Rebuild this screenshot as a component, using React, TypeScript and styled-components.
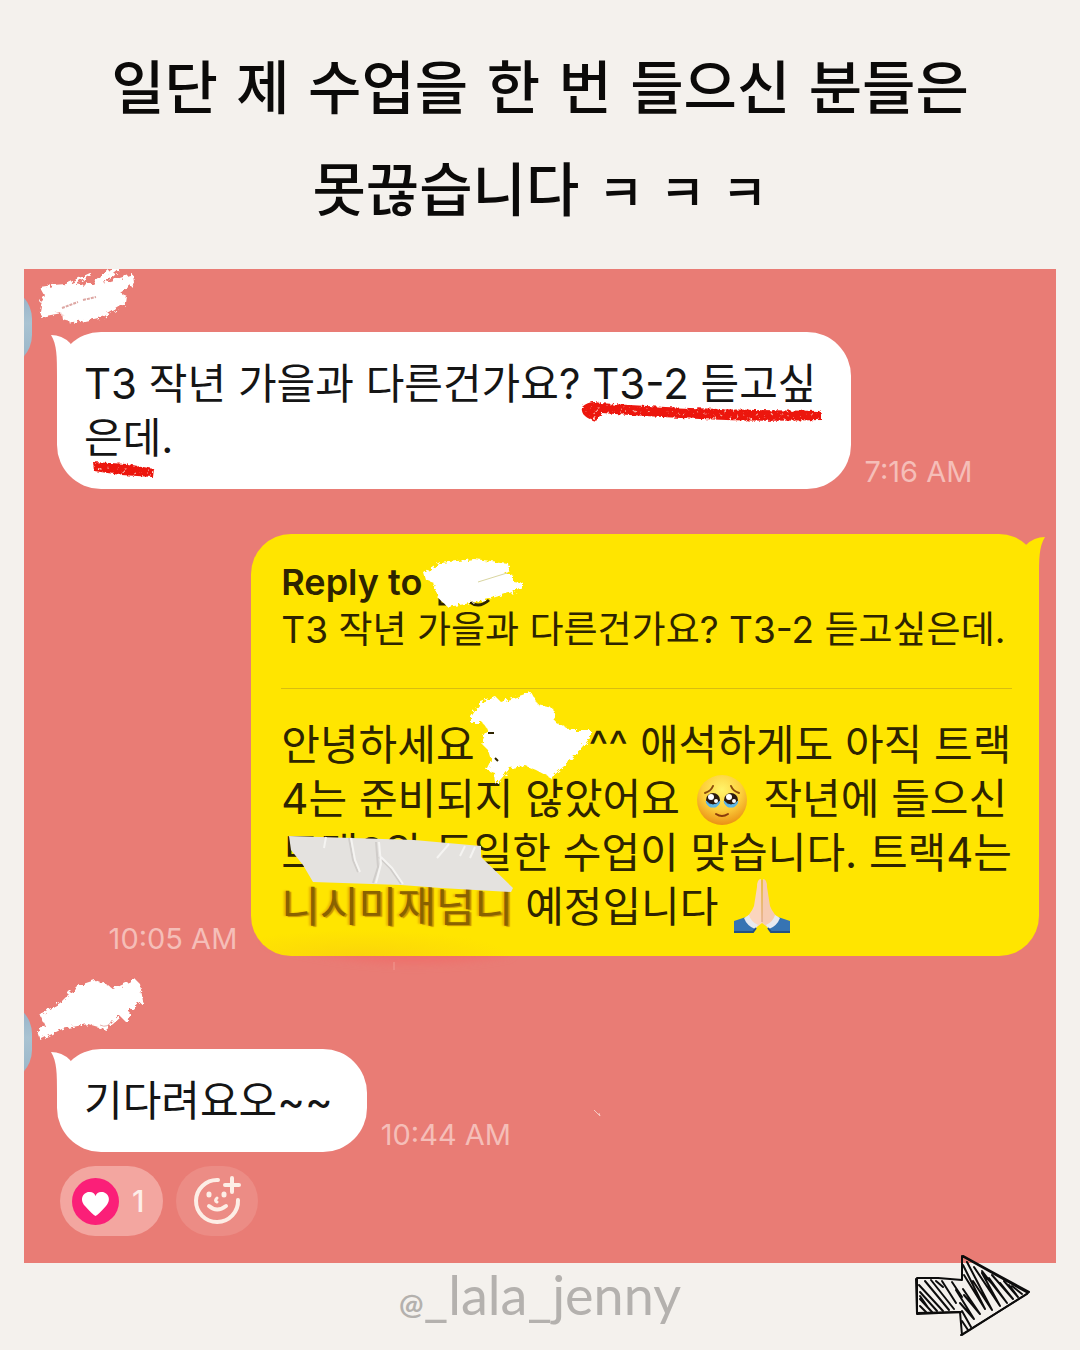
import React from "react";
import styled, { createGlobalStyle } from "styled-components";

const GlobalStyle = createGlobalStyle`
  * { box-sizing: border-box; }
  body {
    margin: 0;
    background: #f4f1ed;
    font-family: Inter, "Noto Sans CJK KR", sans-serif;
  }
`;

const Page = styled.main`
  min-height: 100vh;
  padding: 38px 24px 0;
  background: #f4f1ed;
`;

const Title = styled.h1`
  margin: 0 0 24px;
  color: #0b0a09;
  font-family: "DejaVu Sans", "Noto Sans CJK KR", sans-serif;
  font-size: 58px;
  font-weight: 500;
  line-height: 102px;
  text-align: center;
`;

const TitleLine = styled.span`
  display: block;
`;

const Giggle = styled.span`
  font-size: 50px;
`;

const Chat = styled.section`
  position: relative;
  display: flex;
  flex-direction: column;
  padding-bottom: 27px;
  overflow: hidden;
  background: #e97c75;
`;

const Sender = styled.div<{ $tall?: boolean }>`
  position: relative;
  height: ${(p) => (p.$tall ? 72 : 63)}px;
  margin-top: ${(p) => (p.$tall ? 21 : 0)}px;
  padding-left: 12px;
`;

const Avatar = styled.span<{ $top: number }>`
  position: absolute;
  top: ${(p) => p.$top}px;
  left: -72px;
  width: 80px;
  height: 80px;
  border-radius: 32px;
  background: linear-gradient(#93aec5, #a9c3d2 45%, #96b3c6);
`;

const Row = styled.div<{ $mine?: boolean }>`
  position: relative;
  display: flex;
  flex-direction: ${(p) => (p.$mine ? "row-reverse" : "row")};
  align-items: flex-end;
  gap: 14px;
  padding: ${(p) => (p.$mine ? "0 17px 0 0" : "0 0 0 33px")};
  margin-top: ${(p) => (p.$mine ? 45 : 0)}px;
`;

const Bubble = styled.div<{ $mine?: boolean }>`
  position: relative;
  padding: ${(p) => (p.$mine ? "24px 27px 22px 30px" : "25px 34px 24px 27px")};
  border-radius: ${(p) => (p.$mine ? 40 : 44)}px;
  background: ${(p) =>
    p.$mine
      ? "radial-gradient(150px 26px at 110px 100%, #fbd50a, transparent) #ffe500"
      : "#ffffff"};
  color: ${(p) => (p.$mine ? "#2e2400" : "#151515")};
`;

const Tail = styled.svg<{ $mine?: boolean }>`
  position: absolute;
  top: 0;
  ${(p) => (p.$mine ? "right: -7px; transform: scaleX(-1);" : "left: -7px;")}
`;

const Text = styled.p`
  margin: 0;
  font-size: 42px;
  font-weight: 400;
  line-height: 54px;
  white-space: nowrap;
`;

const Line = styled.span`
  display: block;
`;

const Marked = styled.span`
  position: relative;
`;

const Marker = styled.svg`
  position: absolute;
  left: -12px;
  top: 42px;
`;

const Stamp = styled.time`
  color: #f5beb8;
  font-size: 29px;
  line-height: 34px;
  white-space: nowrap;
`;

const Quote = styled.blockquote`
  margin: 0 0 29px;
  padding-bottom: 34px;
  border-bottom: 1px solid #d9bd10;
`;

const QuoteHead = styled.strong`
  display: block;
  font-size: 36px;
  font-weight: 600;
  line-height: 48px;
`;

const QuoteText = styled.p`
  margin: 0;
  font-size: 37px;
  font-weight: 400;
  line-height: 48px;
  white-space: nowrap;
`;

const Hidden = styled.span<{ $width: number }>`
  position: relative;
  display: inline-block;
  width: ${(p) => p.$width}px;
  height: 1px;
`;

const Cover = styled.svg<{ $left: number; $top: number }>`
  position: absolute;
  z-index: 1;
  left: ${(p) => p.$left}px;
  top: ${(p) => p.$top}px;
  overflow: visible;
`;

const Smudged = styled.span`
  margin: 0 12px 0 0;
  color: #8a6200;
  text-shadow: 2px 1px 1px #c48f00, -2px 0 2px #e8b800;
`;

const Smear = styled.svg`
  position: absolute;
  left: 226px;
  bottom: -22px;
`;

const Emoji = styled.svg`
  margin: -8px 4px;
  vertical-align: -4px;
`;

const Fleck = styled.svg`
  align-self: flex-start;
  margin: 60px 0 0 68px;
`;

const Reactions = styled.div`
  display: flex;
  gap: 13px;
  padding: 14px 36px 0;
`;

const Reaction = styled.button<{ $count?: boolean }>`
  display: flex;
  align-items: center;
  justify-content: ${(p) => (p.$count ? "flex-start" : "center")};
  gap: 13px;
  width: ${(p) => (p.$count ? 103 : 82)}px;
  height: 70px;
  padding: 0 12px;
  border: 0;
  border-radius: 35px;
  background: ${(p) => (p.$count ? "#f3a6a0" : "#ec8c85")};
  color: #fdeee9;
  font-family: Inter, sans-serif;
  font-size: 30px;
  font-weight: 500;
`;

const Footer = styled.footer`
  position: relative;
  display: flex;
  justify-content: center;
`;

const Handle = styled.a`
  color: #b4b1ae;
  font-family: Lato, sans-serif;
  font-size: 54px;
  line-height: 64px;
  text-decoration: none;
`;

const At = styled.span`
  font-size: 29px;
  font-weight: 700;
`;

const NextArrow = styled.svg`
  position: absolute;
  top: -12px;
  right: 24px;
`;

const BubbleTail = ({ mine }: { mine?: boolean }) => (
  <Tail $mine={mine} width="34" height="46" viewBox="-7 0 34 46" aria-hidden="true">
    <path d="M-6 3Q5 3 13 11L26 30L0 45C0 24 0 13-6 3Z" fill={mine ? "#ffe500" : "#fff"} />
  </Tail>
);

const Filters = () => (
  <svg width="0" height="0" style={{ position: "absolute" }} aria-hidden="true">
    <filter id="rough" x="-10%" y="-20%" width="120%" height="140%">
      <feTurbulence type="fractalNoise" baseFrequency="0.22" numOctaves="3" seed="4" result="n" />
      <feDisplacementMap in="SourceGraphic" in2="n" scale="7" />
    </filter>
    <filter id="crayon" x="-5%" y="-40%" width="110%" height="180%">
      <feTurbulence type="fractalNoise" baseFrequency="0.3" numOctaves="3" seed="9" result="n" />
      <feDisplacementMap in="SourceGraphic" in2="n" scale="4" result="d" />
      <feColorMatrix in="n" values="0 0 0 0 0  0 0 0 0 0  0 0 0 0 0  0 -7 0 0 5.5" result="m" />
      <feComposite in="d" in2="m" operator="in" />
    </filter>
    <filter id="soft" x="-10%" y="-60%" width="120%" height="220%">
      <feGaussianBlur stdDeviation="5" />
    </filter>
  </svg>
);

const PleadingFace = () => (
  <Emoji width="52" height="52" viewBox="-1 -1 52 52" role="img" aria-label="pleading face">
    <defs>
      <radialGradient id="face" cx=".5" cy=".3" r=".72">
        <stop offset="0" stopColor="#fff36b" />
        <stop offset=".55" stopColor="#fdcf3b" />
        <stop offset="1" stopColor="#e98d13" />
      </radialGradient>
    </defs>
    <circle cx="25" cy="25" r="25" fill="url(#face)" />
    <path d="M8 18Q14 16 16 11M42 18Q36 16 34 11" fill="none" stroke="#8a4b0b" strokeWidth="2" strokeLinecap="round" />
    {[16, 34].map((x) => (
      <g key={x}>
        <circle cx={x} cy="25" r="7" fill="#2b1a10" />
        <path d={`M${x - 7} 26Q${x} 34 ${x + 7} 26Q${x + 5} 33 ${x} 32Q${x - 5} 33 ${x - 7} 26Z`} fill="#5fb9e8" stroke="#5fb9e8" />
        <circle cx={x - 2} cy="22" r="3" fill="#fff" />
        <circle cx={x + 3} cy="26" r="2" fill="#fff" />
      </g>
    ))}
    <path d="M19 39Q25 43 31 39" fill="none" stroke="#8a3b0b" strokeWidth="2" strokeLinecap="round" />
  </Emoji>
);

const FoldedHands = () => (
  <Emoji width="56" height="56" viewBox="0 0 56 56" role="img" aria-label="folded hands">
    <path d="M27 1Q23 1 23 9L20 28Q17 36 9 42L19 52L28 45Z" fill="#fbd5bd" />
    <path d="M29 1Q33 1 33 9L36 28Q39 36 47 42L37 52L28 45Z" fill="#f7cbb2" />
    <path d="M28 2V44" fill="none" stroke="#d99a80" strokeWidth="1" />
    <path d="M0 43L12 39Q16 48 22 49L18 55H0Z" fill="#3674b3" />
    <path d="M56 43L44 39Q40 48 34 49L38 55H56Z" fill="#3674b3" />
    <path d="M10 40L15 37Q17 44 24 47L21 51Q13 48 10 40ZM46 40L41 37Q39 44 32 47L35 51Q43 48 46 40Z" fill="#e7eaf0" />
    <path d="M0 54H19L22 50M56 54H37L34 50" fill="none" stroke="#235184" strokeWidth="2" />
  </Emoji>
);

export default function App() {
  return (
    <Page>
      <GlobalStyle />
      <Filters />
      <Title>
        <TitleLine>일단 제 수업을 한 번 들으신 분들은</TitleLine>
        <TitleLine>
          못끊습니다 <Giggle>ㅋ ㅋ ㅋ</Giggle>
        </TitleLine>
      </Title>

      <Chat>
        <Sender>
          <Avatar $top={18} />
          <svg width="100" height="58" viewBox="0 0 100 58" aria-hidden="true">
            <path filter="url(#rough)" fill="#fff" d="M4 18L17 16L30 15L54 4L57 5L39 16L57 15L74 0L84 0L67 14L97 5L98 14L84 24L91 27L90 34L67 48L39 54L27 51L26 44L4 48L6 38L4 32L9 27Z" />
            <path d="M26 39L42 33M47 31L60 28" stroke="#dda7a3" strokeWidth="2" strokeDasharray="3 1" />
          </svg>
        </Sender>
        <Row>
          <Bubble>
            <BubbleTail />
            <Text>
              <Line>
                T3 작년 가을과 다른건가요?{" "}
                <Marked>
                  T3-2 듣고싶
                  <Marker width="244" height="24" viewBox="0 0 244 24" aria-hidden="true">
                    <path d="M5 8Q10 2 20 4Q60 8 110 10T240 12L240 18Q180 20 120 17T22 11L14 18Q4 15 5 8Z" fill="#f7a79b" />
                    <path filter="url(#crayon)" d="M2 7Q10 0 20 3Q60 6 110 8T242 11L242 20Q180 22 120 19T22 13L16 21Q0 17 2 7Z" fill="#ec150c" />
                  </Marker>
                </Marked>
              </Line>
              <Line>
                <Marked>
                  은데.
                  <Marker width="100" height="30" viewBox="-35 -7 100 30" aria-hidden="true">
                    <path d="M-12 3L20 5L43 9L43 13L14 12L-11 8Z" fill="#f7a79b" />
                    <path filter="url(#crayon)" d="M-14 1L20 3L47 8L46 16L14 14L-13 10Z" fill="#ec150c" />
                  </Marker>
                </Marked>
              </Line>
            </Text>
          </Bubble>
          <Stamp>7:16 AM</Stamp>
        </Row>

        <Row $mine>
          <Smear width="300" height="50" viewBox="0 0 300 50" aria-hidden="true">
            <path filter="url(#soft)" d="M10 12Q140 50 260 26V14H20Z" fill="#ee6f6b" />
            <path d="M144 34V42" stroke="#f19a92" />
          </Smear>
          <Bubble $mine>
            <BubbleTail mine />
            <Quote>
              <QuoteHead>
                Reply to{" "}
                <Hidden $width={100}>
                  <Cover $left={-8} $top={-38} width="104" height="56" viewBox="0 0 104 56" aria-hidden="true">
                    <path d="M17 41V48H23M47 46Q56 53 66 44" stroke="#2e2400" strokeWidth="3" fill="none" />
                    <path filter="url(#rough)" fill="#fff" d="M1 17L18 7L51 3L85 7L86 14L81 17L90 19L90 25L101 27L96 34L66 43L48 47L25 51L15 42L11 27L3 24Z" />
                    <path d="M55 26L84 17" stroke="#d9d5a0" />
                  </Cover>
                </Hidden>
              </QuoteHead>
              <QuoteText>T3 작년 가을과 다른건가요? T3-2 듣고싶은데.</QuoteText>
            </Quote>
            <Text>
              <Line>
                안녕하세요
                <Hidden $width={114}>
                  <Cover $left={-4} $top={-67} width="122" height="96" viewBox="0 0 122 96" aria-hidden="true">
                    <path filter="url(#rough)" fill="#fff" d="M0 25L10 10L25 5L30 10L60 0L67 13L82 16L85 31L100 38L119 38L119 46L97 71L92 75L80 86L65 78L55 74L39 76L25 93L24 81L15 78L20 68L17 58L10 51L17 38L12 31L0 31Z" />
                    <path d="M17 41H23M24 66L27 69" stroke="#2e2400" strokeWidth="2" />
                  </Cover>
                </Hidden>
                ^^ 애석하게도 아직 트랙
              </Line>
              <Line>
                4는 준비되지 않았어요 <PleadingFace /> 작년에 들으신
              </Line>
              <Line>
                <Hidden $width={0}>
                  <Cover $left={8} $top={-33} width="226" height="60" viewBox="0 0 226 60" aria-hidden="true">
                    <path d="M0 2L125 6L192 12V23L224 54L222 58L152 54L112 51L24 48L14 31L2 16Z" fill="#e4e2df" />
                    <path d="M60 4L64 26L69 38M87 8L89 33L84 49M90 23L101 34L112 50" fill="none" stroke="#d0cdca" strokeWidth="2" />
                    <path d="M62 4L66 26L71 38M90 8L92 30L87 49M92 23L103 34L114 50M37 3L35 14M160 10L148 24M176 12L171 22M186 13L181 24" fill="none" stroke="#f5f4f2" strokeWidth="2" />
                  </Cover>
                </Hidden>
                트랙3와 동일한 수업이 맞습니다. 트랙4는
              </Line>
              <Line>
                <Smudged>니시미재넘니</Smudged>예정입니다 <FoldedHands />
              </Line>
            </Text>
          </Bubble>
          <Stamp>10:05 AM</Stamp>
        </Row>

        <Sender $tall>
          <Avatar $top={25} />
          <svg width="110" height="68" viewBox="0 0 110 68" aria-hidden="true">
            <path filter="url(#rough)" fill="#fff" d="M1 54L9 49L4 37L24 26L41 9L59 3L72 8L77 12L99 2L104 7L107 24L94 34L91 46L84 39L76 46L69 52L52 47L26 52L4 63Z" />
            <path d="M64 48Q72 52 76 43" stroke="#e7b0ab" fill="none" />
          </svg>
        </Sender>
        <Row>
          <Bubble>
            <BubbleTail />
            <Text>기다려요오~~</Text>
          </Bubble>
          <Stamp>10:44 AM</Stamp>
          <Fleck width="10" height="10" viewBox="0 0 10 10" aria-hidden="true">
            <path d="M1 1L7 7L6 4" stroke="#f6c9c2" fill="none" />
          </Fleck>
        </Row>
        <Reactions>
          <Reaction $count aria-label="Heart, 1">
            <svg width="47" height="47" viewBox="0 0 47 47" aria-hidden="true">
              <circle cx="23.500" cy="23.500" r="23.500" fill="#fb1f78" />
              <path d="M23.500 38Q21 37 13 28C6 20 13 13 18 14Q22 14 23.500 18Q25 14 29 14C34 13 41 20 34 28Q26 37 23.500 38Z" fill="#fff" />
            </svg>
            1
          </Reaction>
          <Reaction aria-label="Add reaction">
            <svg width="50" height="50" viewBox="0 0 50 50" fill="none" stroke="#fdeee6" strokeLinecap="round" aria-hidden="true">
              <path d="M26 4A21 21 0 1 0 46 24" strokeWidth="4" />
              <path d="M40 2V16M33 9H47" strokeWidth="4" />
              <path d="M17 18V19M32 18V19" strokeWidth="5" />
              <path d="M25 22Q22 25 25 26" strokeWidth="3" />
              <path d="M17 30Q25 37 34 30" strokeWidth="4" />
            </svg>
          </Reaction>
        </Reactions>
      </Chat>

      <Footer>
        <Handle href="#profile">
          <At>@</At>_lala_jenny
        </Handle>
        <NextArrow width="120" height="88" viewBox="0 0 120 88" fill="none" stroke="#0c0c0c" strokeLinejoin="round" strokeLinecap="round" aria-hidden="true">
          <path d="M5 27L26 27L50 29V5L116 42L50 84L48 61L5 62Z" strokeWidth="2" />
          <path d="M4 28L5 63L49 61M51 5L117 41M49 84L115 43" strokeWidth="2" />
          <path d="M8 55L14 61M8 48L20 61M8 41L25 60M7 34L31 60M13 30L37 59M19 29L42 58M30 30L44 52M40 31L50 46M8 45L17 58M24 30L31 36" strokeWidth="2" />
          <path d="M51 14L73 58L52 24M55 11L80 59L61 30M62 16L88 55L70 22M70 20L95 52L77 27M80 24L101 48L88 32M92 30L106 46L97 34M100 35L110 43M51 38L68 63L52 44M44 39L62 68L48 52M50 60L59 76M50 70L56 79M73 25L84 37" strokeWidth="2" />
        </NextArrow>
      </Footer>
    </Page>
  );
}
